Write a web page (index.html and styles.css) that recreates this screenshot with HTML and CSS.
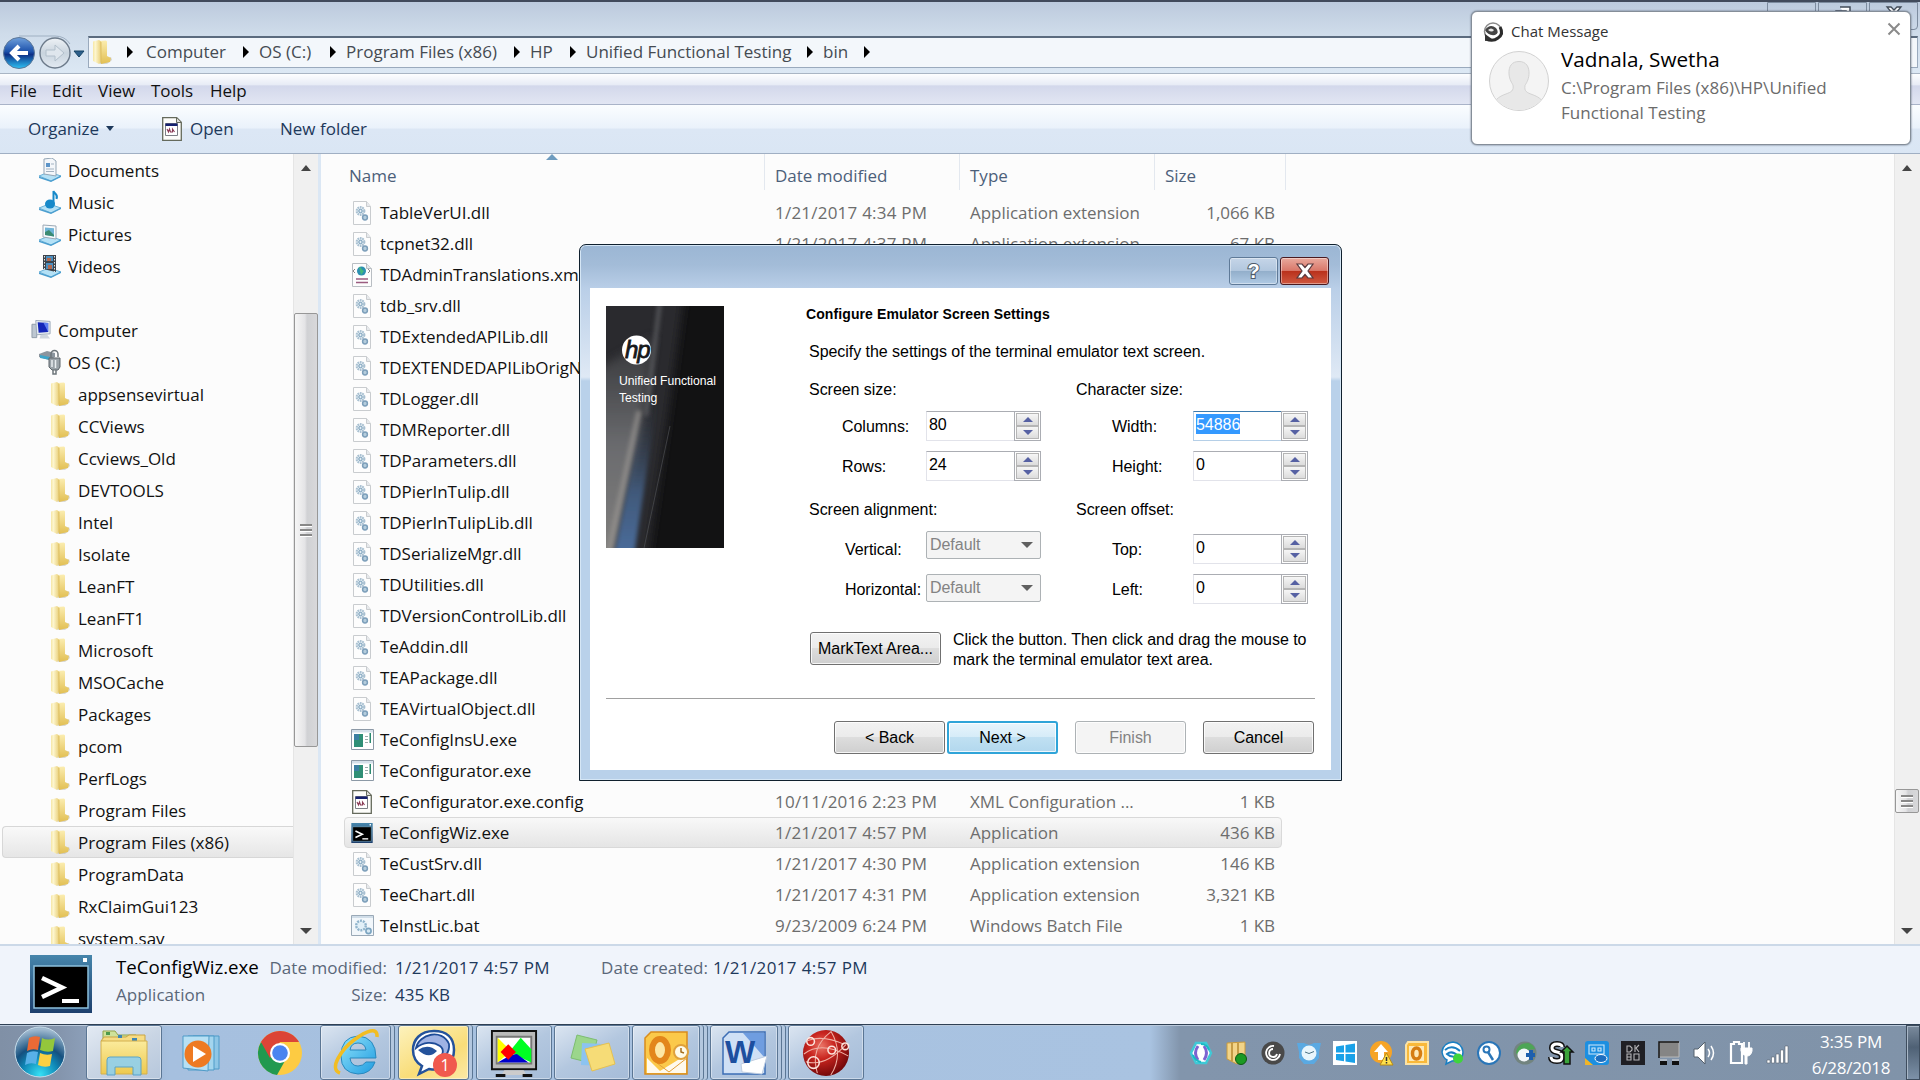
FILE: index.html
```
<!DOCTYPE html>
<html lang="en">
<head>
<meta charset="utf-8">
<title>Unified Functional Testing - bin</title>
<link rel="stylesheet" href="styles.css">
</head>
<body>
<svg class="defs" width="0" height="0">
  <defs>
    <linearGradient id="gFold" x1="0" x2="1"><stop offset="0" stop-color="#f6e6a4"/><stop offset=".3" stop-color="#fdf6cf"/><stop offset="1" stop-color="#e9cf78"/></linearGradient>
    <linearGradient id="gFold2" x1="0" x2="0" y1="0" y2="1"><stop offset="0" stop-color="#fbedb0"/><stop offset="1" stop-color="#e2bf52"/></linearGradient>
    <linearGradient id="gBlue" x1="0" x2="0" y1="0" y2="1"><stop offset="0" stop-color="#6fa0dc"/><stop offset=".45" stop-color="#1d52ab"/><stop offset=".55" stop-color="#0c2f86"/><stop offset="1" stop-color="#2fc3f5"/></linearGradient>
    <linearGradient id="gFwd" x1="0" x2="0" y1="0" y2="1"><stop offset="0" stop-color="#eef2f6"/><stop offset=".5" stop-color="#c9d4de"/><stop offset="1" stop-color="#e3eaf2"/></linearGradient>
    <linearGradient id="gTerm" x1="0" x2="0" y1="0" y2="1"><stop offset="0" stop-color="#4685ab"/><stop offset="1" stop-color="#1d3f6d"/></linearGradient>
    <radialGradient id="gOrb" cx=".5" cy=".95" r=".9"><stop offset="0" stop-color="#35e0f5"/><stop offset=".4" stop-color="#0f86b5"/><stop offset=".62" stop-color="#15507f"/><stop offset="1" stop-color="#9fb9cf"/></radialGradient>
    <radialGradient id="gRed" cx=".4" cy=".35" r=".7"><stop offset="0" stop-color="#ea7466"/><stop offset=".4" stop-color="#c9251f"/><stop offset="1" stop-color="#6b0508"/></radialGradient>
    <linearGradient id="gIe" x1="0" x2="1" y1="0" y2="1"><stop offset="0" stop-color="#8fe3fb"/><stop offset="1" stop-color="#1f9be0"/></linearGradient>
    <linearGradient id="gYel" x1="0" x2="0" y1="0" y2="1"><stop offset="0" stop-color="#fbeb9c"/><stop offset="1" stop-color="#edc94f"/></linearGradient>
  </defs>
  <symbol id="folder" viewBox="0 0 22 26"><path d="M10 21l9-3 1 3-5 4-8 0z" fill="#999" opacity=".35"/><path d="M7 2l7-.5 1 1V17l4 2-1 4-9 2z" fill="url(#gFold2)"/><path d="M1 2.500l6-1.500 2 1.500V23l-2 2-6-3z" fill="url(#gFold)"/><path d="M9 3v21" stroke="#d9b95a" stroke-width=".8"/></symbol>
  <symbol id="dll" viewBox="0 0 20 24"><path d="M1.500.5h13l4 5v18h-17z" fill="#fdfdfd" stroke="#c9cccf"/><path d="M14.500.5v5h4" fill="#e6e9ec" stroke="#c9cccf"/><circle cx="8.500" cy="10" r="3.800" fill="#e6eff5" stroke="#a9c0d1" stroke-width="2.200" stroke-dasharray="1.700 .7"/><circle cx="8.500" cy="10" r="1.700" fill="none" stroke="#6f98b5"/><circle cx="13" cy="16.500" r="2.400" fill="#b5cddd" stroke="#7d9fba" stroke-width="1.500"/></symbol>
  <symbol id="xml" viewBox="0 0 20 24"><path d="M.5.5h14l5 5v18H.5z" fill="#fdfdfd" stroke="#b9bec3"/><path d="M14.500.5v5h5" fill="#e3e7ea" stroke="#b9bec3"/><circle cx="9.500" cy="8" r="4.500" fill="#2c8fb0"/><path d="M7 4c3 0 2 3 5 4l-3 4z" fill="#44b87b"/><path d="M3 6L1 8l2 2M16 6l2 2-2 2" fill="none" stroke="#666" stroke-width=".8"/><path d="M4 16h12M4 19.500h12" stroke="#9b5c80" stroke-width="1.500"/></symbol>
  <symbol id="exe" viewBox="0 0 23 21"><path d="M.5.5h22v20H.5z" fill="#fff" stroke="#8c99a6"/><path d="M1 1h21v2.500H1z" fill="#d5e0ea"/><path d="M3 5h9v13H3z" fill="#2f8f76"/><path d="M3 5h5v6H3z" fill="#3b7fa2"/><path d="M14 7h3v1h-3zm0 3h3v1h-3zm0 3h3v1h-3z" fill="#9aa"/><path d="M18.500 4h1.500v10h-1.500z" fill="#2c8a70"/></symbol>
  <symbol id="cfg" viewBox="0 0 20 24"><path d="M.7.7h14l4.600 4.600v18H.7z" fill="#fdfdfa" stroke="#656a5c" stroke-width="1.300"/><path d="M14.500 1v4.500H19" fill="#ddd" stroke="#656a5c"/><path d="M3.500 6.500h12v12h-12z" fill="#fff" stroke="#7c7f86"/><path d="M3.500 6.500h12v2.500h-12z" fill="#15206e"/><path d="M5 12l1.500 3 1-3 1 3h2v-3l2 3" fill="none" stroke="#8a3a55" stroke-width="1.100"/></symbol>
  <symbol id="term" viewBox="0 0 62 58"><path d="M0 0h62v58H0z" fill="url(#gTerm)"/><path d="M4 11h54v42H4z" fill="#000" stroke="#8cc0dc" stroke-width="1.500"/><path d="M53 3h4v4h-4z" fill="#fff"/><path d="M12 23l20 9.500L12 42" fill="none" stroke="#fff" stroke-width="4.500"/><path d="M32 44h17v4H32z" fill="#fff"/></symbol>
  <symbol id="bat" viewBox="0 0 23 21"><path d="M.5.5h22v20H.5z" fill="#f2f7fb" stroke="#9aa9b7"/><path d="M1 1h21v2H1z" fill="#d0dde8"/><circle cx="10" cy="10.500" r="4.800" fill="#e2f0f8" stroke="#90b4cc" stroke-width="2.400" stroke-dasharray="2 1"/><circle cx="17.500" cy="16" r="2.600" fill="#d6e8f3" stroke="#7ba4c0" stroke-width="1.600"/></symbol>
  <symbol id="base" viewBox="0 0 24 24"><path d="M1 18l10-4 12 4-10 5z" fill="#b4e1f6" stroke="#6bb2d8"/><path d="M1 18.500v1.500l12 4 10-5v-1.500l-10 5z" fill="#4b9ecf"/></symbol>
  <symbol id="lib-doc" viewBox="0 0 24 24"><use href="#base"/><path d="M6 1l8-1 4 3v15l-12-2z" fill="#f4f7fa" stroke="#93a5b5"/><path d="M8 5h4v4H8z" fill="#5c94c8"/><path d="M13 6h3M8 11h8M8 13.500h8" stroke="#a3b3c2"/></symbol>
  <symbol id="lib-mus" viewBox="0 0 24 24"><use href="#base"/><ellipse cx="12" cy="14" rx="5" ry="4.500" fill="#1789c9"/><path d="M15.500 14V1c1 3 5 3 3 8" fill="none" stroke="#1789c9" stroke-width="2"/></symbol>
  <symbol id="lib-pic" viewBox="0 0 24 24"><use href="#base"/><path d="M5 3l13 1v13L5 15z" fill="#f8fafc" stroke="#9aa8b5"/><path d="M7 5.500l9 .8v8.200L7 13z" fill="#6fb4d8"/><path d="M7 10l4-2 5 5v1.500L7 13z" fill="#3b8b72"/></symbol>
  <symbol id="lib-vid" viewBox="0 0 24 24"><use href="#base"/><path d="M5 1h13v17L5 15z" fill="#3d434b"/><path d="M8 2h7v5H8zM8 9h7v6H8z" fill="#4c8fc0"/><path d="M9 4h4v3H9zM10 11h4v4h-4z" fill="#b4694f"/><path d="M6.500 2v14M16.500 2v16" stroke="#e6e6e6" stroke-dasharray="1.500 1.500"/></symbol>
  <symbol id="comp" viewBox="0 0 22 22"><path d="M1 5h5v14H1z" fill="#bdc7d1" stroke="#8f9ba8"/><path d="M5 1l15 1v13l-14 1z" fill="#e6ecf2" stroke="#9aa8b8"/><path d="M7 3l11 .7v9.500L8 14z" fill="#1426b8"/><path d="M13 3.400l5 .3v9.500z" fill="#5c7df0"/><path d="M10 16h7l3 4H9z" fill="#cfd6de"/></symbol>
  <symbol id="drive" viewBox="0 0 24 26"><path d="M1 5l8-3 8 2v4l-6 3-10-3z" fill="#8b959e"/><path d="M2 6l10 2v3L2 9z" fill="#3ea5c9"/><path d="M11 9h11v9l-2 3h-6l-3-3z" fill="#9aa2a8" stroke="#5d656b"/><path d="M13 9V5a3.500 3.500 0 0 1 7 0v3M15 21v4h3v-4" fill="none" stroke="#6d757b" stroke-width="1.500"/><path d="M14 11v7M17.500 11v8" stroke="#e9edf0" stroke-width="1.500"/></symbol>
</svg>

<div class="explorer">
  <header class="glass">
    <div class="caption">
      <span class="cap-btn"></span>
      <span class="cap-btn"><svg width="16" height="14"><path d="M5 1h10v9h-4M1 5h10v8H1z" fill="#fff" stroke="#414b58" stroke-width="1.500"/></svg></span>
      <span class="cap-btn"><svg width="18" height="14"><path d="M2 1h4l3 3 3-3h4l-5 6 5 6H2l5-6z" fill="#fff" stroke="#414b58" stroke-width="1.300"/></svg></span>
    </div>
    <div class="nav">
      <svg class="arrows" width="88" height="38" viewBox="0 0 88 38">
        <path d="M19 2h36q10 0 15 8" fill="none" stroke="#9fb0c2"/>
        <circle cx="19" cy="19" r="15.500" fill="url(#gBlue)" stroke="#5d7898"/>
        <path d="M28 19H13M19 12L12 19l7 7" fill="none" stroke="#fff" stroke-width="4"/>
        <circle cx="55" cy="19" r="15" fill="url(#gFwd)" stroke="#6c7a8a" stroke-width="1.400"/>
        <path d="M46 16h9v-5l9 8-9 8v-5h-9z" fill="#dfe6ed" stroke="#b2bfcb"/>
        <path d="M74 17h10l-5 6z" fill="#2d5f8b" stroke="#174566"/>
      </svg>
      <div class="crumbs">
        <svg width="22" height="26"><use href="#folder"/></svg>
        <i></i><span>Computer</span><i></i><span>OS (C:)</span><i></i><span>Program Files (x86)</span><i></i><span>HP</span><i></i><span>Unified Functional Testing</span><i></i><span>bin</span><i></i>
      </div>
    </div>
  </header>
  <nav class="menu"><span>File</span><span>Edit</span><span>View</span><span>Tools</span><span>Help</span></nav>
  <div class="toolbar">
    <span class="organize">Organize<i></i></span>
    <span class="open"><svg width="20" height="24"><use href="#cfg"/></svg>Open</span>
    <span>New folder</span>
  </div>
  <main class="body">
    <aside class="tree">
      <div class="node lib"><svg width="24" height="24"><use href="#lib-doc"/></svg>Documents</div>
      <div class="node lib"><svg width="24" height="24"><use href="#lib-mus"/></svg>Music</div>
      <div class="node lib"><svg width="24" height="24"><use href="#lib-pic"/></svg>Pictures</div>
      <div class="node lib"><svg width="24" height="24"><use href="#lib-vid"/></svg>Videos</div>
      <div class="node"></div>
      <div class="node top"><svg width="21" height="22"><use href="#comp"/></svg>Computer</div>
      <div class="node lib"><svg width="24" height="26"><use href="#drive"/></svg>OS (C:)</div>
      <div class="node dir"><svg width="22" height="26"><use href="#folder"/></svg>appsensevirtual</div>
      <div class="node dir"><svg width="22" height="26"><use href="#folder"/></svg>CCViews</div>
      <div class="node dir"><svg width="22" height="26"><use href="#folder"/></svg>Ccviews_Old</div>
      <div class="node dir"><svg width="22" height="26"><use href="#folder"/></svg>DEVTOOLS</div>
      <div class="node dir"><svg width="22" height="26"><use href="#folder"/></svg>Intel</div>
      <div class="node dir"><svg width="22" height="26"><use href="#folder"/></svg>Isolate</div>
      <div class="node dir"><svg width="22" height="26"><use href="#folder"/></svg>LeanFT</div>
      <div class="node dir"><svg width="22" height="26"><use href="#folder"/></svg>LeanFT1</div>
      <div class="node dir"><svg width="22" height="26"><use href="#folder"/></svg>Microsoft</div>
      <div class="node dir"><svg width="22" height="26"><use href="#folder"/></svg>MSOCache</div>
      <div class="node dir"><svg width="22" height="26"><use href="#folder"/></svg>Packages</div>
      <div class="node dir"><svg width="22" height="26"><use href="#folder"/></svg>pcom</div>
      <div class="node dir"><svg width="22" height="26"><use href="#folder"/></svg>PerfLogs</div>
      <div class="node dir"><svg width="22" height="26"><use href="#folder"/></svg>Program Files</div>
      <div class="node dir on"><svg width="22" height="26"><use href="#folder"/></svg>Program Files (x86)</div>
      <div class="node dir"><svg width="22" height="26"><use href="#folder"/></svg>ProgramData</div>
      <div class="node dir"><svg width="22" height="26"><use href="#folder"/></svg>RxClaimGui123</div>
      <div class="node dir"><svg width="22" height="26"><use href="#folder"/></svg>system.sav</div>
    </aside>
    <div class="scroll left-scroll"><i class="up"></i><div class="thumb"><b></b><b></b><b></b></div><i class="down"></i></div>
    <section class="files">
      <div class="head"><span>Name<i class="sort"></i></span><span>Date modified</span><span>Type</span><span>Size</span></div>
      <div class="row"><svg width="20" height="24"><use href="#dll"/></svg><span>TableVerUI.dll</span><em class="date">1/21/2017 4:34 PM</em><em>Application extension</em><em>1,066 KB</em></div>
      <div class="row"><svg width="20" height="24"><use href="#dll"/></svg><span>tcpnet32.dll</span><em class="date">1/21/2017 4:37 PM</em><em>Application extension</em><em>67 KB</em></div>
      <div class="row"><svg width="20" height="24"><use href="#xml"/></svg><span>TDAdminTranslations.xml</span></div>
      <div class="row"><svg width="20" height="24"><use href="#dll"/></svg><span>tdb_srv.dll</span></div>
      <div class="row"><svg width="20" height="24"><use href="#dll"/></svg><span>TDExtendedAPILib.dll</span></div>
      <div class="row"><svg width="20" height="24"><use href="#dll"/></svg><span>TDEXTENDEDAPILibOrigN</span></div>
      <div class="row"><svg width="20" height="24"><use href="#dll"/></svg><span>TDLogger.dll</span></div>
      <div class="row"><svg width="20" height="24"><use href="#dll"/></svg><span>TDMReporter.dll</span></div>
      <div class="row"><svg width="20" height="24"><use href="#dll"/></svg><span>TDParameters.dll</span></div>
      <div class="row"><svg width="20" height="24"><use href="#dll"/></svg><span>TDPierInTulip.dll</span></div>
      <div class="row"><svg width="20" height="24"><use href="#dll"/></svg><span>TDPierInTulipLib.dll</span></div>
      <div class="row"><svg width="20" height="24"><use href="#dll"/></svg><span>TDSerializeMgr.dll</span></div>
      <div class="row"><svg width="20" height="24"><use href="#dll"/></svg><span>TDUtilities.dll</span></div>
      <div class="row"><svg width="20" height="24"><use href="#dll"/></svg><span>TDVersionControlLib.dll</span></div>
      <div class="row"><svg width="20" height="24"><use href="#dll"/></svg><span>TeAddin.dll</span></div>
      <div class="row"><svg width="20" height="24"><use href="#dll"/></svg><span>TEAPackage.dll</span></div>
      <div class="row"><svg width="20" height="24"><use href="#dll"/></svg><span>TEAVirtualObject.dll</span></div>
      <div class="row"><svg width="23" height="21"><use href="#exe"/></svg><span>TeConfigInsU.exe</span></div>
      <div class="row"><svg width="23" height="21"><use href="#exe"/></svg><span>TeConfigurator.exe</span></div>
      <div class="row"><svg width="20" height="24"><use href="#cfg"/></svg><span>TeConfigurator.exe.config</span><em class="date">10/11/2016 2:23 PM</em><em>XML Configuration ...</em><em>1 KB</em></div>
      <div class="row on"><svg width="22" height="20"><use href="#term"/></svg><span>TeConfigWiz.exe</span><em class="date">1/21/2017 4:57 PM</em><em>Application</em><em>436 KB</em></div>
      <div class="row"><svg width="20" height="24"><use href="#dll"/></svg><span>TeCustSrv.dll</span><em class="date">1/21/2017 4:30 PM</em><em>Application extension</em><em>146 KB</em></div>
      <div class="row"><svg width="20" height="24"><use href="#dll"/></svg><span>TeeChart.dll</span><em class="date">1/21/2017 4:31 PM</em><em>Application extension</em><em>3,321 KB</em></div>
      <div class="row"><svg width="23" height="21"><use href="#bat"/></svg><span>TeInstLic.bat</span><em class="date">9/23/2009 6:24 PM</em><em>Windows Batch File</em><em>1 KB</em></div>
    </section>
    <div class="scroll right-scroll"><i class="up"></i><div class="thumb"><b></b><b></b><b></b></div><i class="down"></i></div>
  </main>
  <footer class="details">
    <svg width="62" height="58"><use href="#term"/></svg>
    <div class="meta">
      <span class="fname">TeConfigWiz.exe</span><span class="k">Date modified:</span><span class="date">1/21/2017 4:57 PM</span><span class="k">Date created:</span><span class="date">1/21/2017 4:57 PM</span>
      <span class="kind">Application</span><span class="k">Size:</span><span>435 KB</span>
    </div>
  </footer>
</div>

<div class="taskbar">
  <div class="start"><svg width="52" height="52" viewBox="0 0 52 52"><circle cx="26" cy="26" r="25" fill="url(#gOrb)" stroke="#c5dcea"/><path d="M15 12q5-3 11-1l-2 13q-6-2-11 1z" fill="#ea6a35"/><path d="M28 12q6 3 13 0l-2 13q-6 2-13-1z" fill="#94c73b"/><path d="M13 27q5-3 11-1l-2 12q-6-2-11 1z" fill="#58b0e8"/><path d="M26 27q6 3 12 1l-2 12q-6 2-12-1z" fill="#fbd043"/></svg></div>
  <div class="task w76 active"><svg width="50" height="48" viewBox="0 0 50 48"><path d="M4 10V2h12l3 4h18v6z" fill="#cfe29a" stroke="#93a44d"/><path d="M2 12l3-4h22l3-2h16v10z" fill="#f6dc84" stroke="#c9a445"/><path d="M7 3h4v3H7z" fill="#4c9a4c"/><path d="M19 6h4v3h-4zM33 9h5v3h-5z" fill="#3e86b4"/><path d="M2 12h46v33H2z" fill="url(#gYel)" stroke="#d3b04f"/><path d="M8 46V31q0-3 3-3h28q3 0 3 3v15h-8v-8H16v8z" fill="#8fd0f0" stroke="#4d9fce" opacity=".9"/></svg></div>
  <div class="task w78 plain"><svg width="42" height="42" viewBox="0 0 42 42"><path d="M12 4h26v33H12z" fill="#8ec6e6" stroke="#4f9bc8"/><path d="M7 4h26v34H7z" fill="#a3d5ee" stroke="#4f9bc8"/><path d="M2 4h26l-1 35-25-3z" fill="#b7e0f4" stroke="#4f9bc8"/><circle cx="17" cy="22" r="13.500" fill="#ee7a22"/><path d="M12 14v16l13-8z" fill="#fff"/></svg></div>
  <div class="task w80 plain"><svg width="44" height="44" viewBox="0 0 44 44"><circle cx="22" cy="22" r="22" fill="#fdcb42"/><path d="M3 11a22 22 0 0 0 16 33l9-16-6-6-9 0z" fill="#21994f"/><path d="M22 11h19a22 22 0 0 0-38 0l9 16z" fill="#dc4437"/><circle cx="22" cy="22" r="10" fill="#fff"/><circle cx="22" cy="22" r="7.800" fill="#4a84f0"/></svg></div>
  <div class="task w70 stack"><svg width="48" height="48" viewBox="0 0 48 48"><path d="M44 29H18q1 8 8 8 5 0 8-4h9q-4 12-17 12-17-1-17-18Q9 8 26 7q18 1 18 22zM18 21h16q-1-7-8-7t-8 7z" fill="url(#gIe)" stroke="#2988bd"/><path d="M8 44C-4 40 10 20 22 11S46-3 45 8" fill="none" stroke="#f2bd22" stroke-width="3.500"/></svg></div>
  <div class="task w70 stack alert"><svg width="48" height="50" viewBox="0 0 48 50"><path d="M24 3C10 3 3 12 3 22c0 8 4 13 9 16l-3 8 10-5c15 3 25-6 25-19S36 3 24 3z" fill="#fff" stroke="#24529b" stroke-width="2.500"/><path d="M6 20C9 6 32 0 39 16 40 24 34 32 27 31c6-3 8-9 3-13-7-5-17-4-24 2z" fill="#9fb2e3" stroke="#1e4b97" stroke-width="1.800"/><path d="M8 22q10-7 19 1-8 9-19-1z" fill="#24529b"/></svg><span class="badge">1</span></div>
  <div class="task w76"><svg width="48" height="48" viewBox="0 0 50 50"><path d="M2 2h46v40H2z" fill="#b9b9b9" stroke="#111" stroke-width="2"/><path d="M7 8h36v28H7z" fill="#fff" stroke="#777" stroke-width="2"/><path d="M8 9l14 14-14 12z" fill="#ff0"/><path d="M32 9l11 12v14L20 24z" fill="#0f2"/><path d="M8 35l14-8 6-1 12 9z" fill="#00c"/><path d="M19 16l8 8-8 8-8-8z" fill="#f00"/><path d="M15 43h20l3 5H12z" fill="#ccc"/><path d="M6 47h10v3H6zM34 47h10v3H34z" fill="#111"/></svg></div>
  <div class="task w76"><svg width="46" height="42" viewBox="0 0 46 42"><path d="M8 3l20 5-6 23L2 26z" fill="#9bd68c" stroke="#7dbd71"/><path d="M13 11l21 1-1 22-21-1z" fill="#8cc3f0"/><path d="M16 17l24-6 6 21-23 7z" fill="#f6dc77" stroke="#e5c151"/></svg></div>
  <div class="task w68 stack3"><svg width="46" height="46" viewBox="0 0 46 46"><path d="M8 2h36v42H2V8z" fill="#fbc94a" stroke="#d98c1c" stroke-width="1.500"/><path d="M4 28l13 13 26-16v18H4z" fill="#fff" opacity=".9"/><path d="M44 28L26 42l-12-9" fill="none" stroke="#e1a03a"/><ellipse cx="17" cy="20" rx="8" ry="11" fill="#fde6a4" stroke="#e3861b" stroke-width="6"/><circle cx="38" cy="22" r="7" fill="#fffbe8" stroke="#dfa13c" stroke-width="2"/><path d="M38 18v4l3 1" fill="none" stroke="#a66d1b" stroke-width="1.500"/></svg></div>
  <div class="task w68 stack3"><svg width="46" height="46" viewBox="0 0 46 46"><path d="M8 2h36v42H2V8z" fill="#cfe0f5" stroke="#3c6db5" stroke-width="1.500"/><path d="M22 3h21v24z" fill="#6f9de0"/><path d="M20 34l26-8-5 18-20-2z" fill="#fff" stroke="#bfcde0"/><text x="4" y="33" class="word">W</text></svg></div>
  <div class="task w76"><svg width="48" height="48" viewBox="0 0 50 50"><circle cx="25" cy="25" r="24" fill="url(#gRed)"/><path d="M6 12q16-6 38 4M2 26q18-14 46 2M16 46Q8 20 30 3M30 48Q44 26 30 2M4 34q20 6 42-18" fill="none" stroke="#f0b0a5" stroke-width="1.100"/><circle cx="31" cy="22" r="4" fill="none" stroke="#fbe3dc" stroke-width="1.600"/><circle cx="12" cy="35" r="6" fill="none" stroke="#fbe3dc" stroke-width="1.600"/><circle cx="9" cy="13" r="4" fill="none" stroke="#fbe3dc" stroke-width="1.600"/><circle cx="45" cy="18" r="3.500" fill="none" stroke="#fbe3dc" stroke-width="1.600"/></svg></div>
  <div class="tray">
    <svg viewBox="0 0 24 24"><path d="M7 2h10l5 10-5 10H7L2 12z" fill="#fff" stroke="#3fc9d6" stroke-width="2.500"/><path d="M9 5q-5 7 0 14M15 5q5 7 0 14" fill="none" stroke="#7c63d0" stroke-width="3"/><path d="M4 14q2 6 8 7M12 3q6 0 8 6" stroke="#19b9c4" stroke-width="2" fill="none"/></svg>
    <svg viewBox="0 0 24 24"><path d="M2 2l18-1v17l-8 5-10-5z" fill="#f2d488" stroke="#c89a3c"/><path d="M7 2v18M13 2v18" stroke="#b78931" stroke-width="1.500"/><circle cx="16" cy="18" r="5.500" fill="#1b9a23" stroke="#0d5a12"/></svg>
    <svg viewBox="0 0 24 24"><circle cx="12" cy="12" r="11.500" fill="#494949"/><path d="M19 13a7 7 0 1 1-6-8M16 13a4 4 0 1 1-4-5" fill="none" stroke="#fff" stroke-width="1.800"/></svg>
    <svg viewBox="0 0 24 24"><path d="M0 2l7 0 5 2 5-2 7 0-2 9v6l-5 6H7l-5-6v-6z" fill="#5aa9e2"/><circle cx="12" cy="12" r="7.500" fill="#e8f5fc"/><path d="M8 11l4 1.500 5-2" stroke="#4a7184" fill="none"/></svg>
    <svg viewBox="0 0 24 24"><path d="M0 0h24v24H0z" fill="#fff"/><path d="M3 5.500l8-1.200v7.200H3zM12.500 4L22 2.500v9h-9.500zM3 13h8v7.200L3 19zM12.500 13H22v9l-9.500-1.500z" fill="#1aa1e8"/></svg>
    <svg viewBox="0 0 24 24"><circle cx="12" cy="11" r="11" fill="#f6a426"/><path d="M12 3l7 8h-4v8H9v-8H5z" fill="#fff"/><path d="M17.500 12l6.500 12H11z" fill="#ffe14c" stroke="#b98a13"/><path d="M17.500 16v4m0 1v1.500" stroke="#333" stroke-width="1.500"/></svg>
    <svg viewBox="0 0 24 24"><path d="M3 1h20v22H1V4z" fill="#f9b93a" stroke="#fbe3a6" stroke-width="2"/><path d="M4 5h15v15H4z" fill="#fdeab8"/><ellipse cx="11.500" cy="12.500" rx="4" ry="5.500" fill="none" stroke="#d67d12" stroke-width="3.500"/></svg>
    <svg viewBox="0 0 24 24"><path d="M12 1Q2 2 1 11q1 6 5 8l-1 4 6-3q11 0 11-9Q21 2 12 1z" fill="#fff" stroke="#1a7fc2" stroke-width="1.500"/><path d="M4 9q7-6 15 1M6 13q5-4 11 2-7 2-11-2z" fill="none" stroke="#1a7fc2" stroke-width="2"/><circle cx="17" cy="17.500" r="5" fill="#3fd43c"/></svg>
    <svg viewBox="0 0 24 24"><circle cx="12" cy="12" r="11" fill="#fff" stroke="#2a76b8" stroke-width="2"/><circle cx="9.500" cy="8.500" r="3" fill="none" stroke="#2a76b8" stroke-width="2"/><path d="M11 11l5 8" stroke="#2a76b8" stroke-width="2.500"/></svg>
    <svg viewBox="0 0 24 24"><circle cx="12" cy="12" r="11.500" fill="#72847f"/><path d="M3 12Q4 2 15 2q5 1 7 6l-8 1-6 2-2 4z" fill="#4da556"/><circle cx="11" cy="14" r="6.500" fill="#f2f6fa"/><path d="M18 9v10m-5-5h9" stroke="#1d5fae" stroke-width="4"/></svg>
    <svg viewBox="0 0 24 24"><path d="M13 6q0-3-5-3-5 0-5 4 0 3 5 4 5 1 5 5t-5 4q-6 0-6-4" fill="none" stroke="#111" stroke-width="6"/><path d="M13 6q0-3-5-3-5 0-5 4 0 3 5 4 5 1 5 5t-5 4q-6 0-6-4" fill="none" stroke="#fff" stroke-width="3"/><path d="M15 23V11h-3l6-6 6 6h-3v12z" fill="#3ba53a" stroke="#111" stroke-width="1.500"/></svg>
    <svg viewBox="0 0 24 24"><rect width="24" height="24" rx="3" fill="#1d8fe0"/><path d="M4 4h15v9H4zM7 7h3v3H7zM13 7h3v3h-3z" fill="none" stroke="#cfeafc" stroke-width="1.100"/><ellipse cx="16" cy="17.500" rx="6" ry="4" fill="#1c6ec0" stroke="#fff"/><path d="M0 17l8 7H0z" fill="#f0b429"/></svg>
    <svg viewBox="0 0 24 24"><path d="M0 0h24v24H0z" fill="#1f1f24"/><path d="M6 5h3l2 2v2l-2 2H6zM14 4v7m4-7l-3 3 3 4M6 13h4v6H6zm0 3h4M13 13h5v6h-5z" fill="none" stroke="#b5b5b8" stroke-width="1.100"/></svg>
    <svg viewBox="0 0 24 24"><path d="M2 1h20v15H2z" fill="#858585" stroke="#b9b9b9"/><path d="M2 17V1h20" fill="none" stroke="#111" stroke-width="1.500"/><path d="M3 20h7v4H3zM15 20h7v4h-7z" fill="#111"/><path d="M3 19h7M15 19h7" stroke="#ddd"/></svg>
    <svg viewBox="0 0 24 24"><path d="M1 8h4l7-7v22l-7-7H1z" fill="#fff" stroke="#55606c"/><path d="M15 8q3 4 0 8M18 5q5 7 0 14" fill="none" stroke="#fff" stroke-width="1.500"/></svg>
    <svg viewBox="0 0 24 24"><path d="M2 3h3V1h5v2h3v19H2z" fill="none" stroke="#fff" stroke-width="2.200"/><path d="M15 1v6M20 1v6" stroke="#fff" stroke-width="1.800"/><path d="M12 7h11v3q-1 5-5 5t-6-5zM16 15v8h2v-8z" fill="#fff" stroke="#fff"/></svg>
    <svg viewBox="0 0 24 24"><path d="M2 22v-3h3v3zM6.500 22v-6h3v6zM11 22V13h3v9zM15.500 22V9h3v13zM20 22V5h3v17z" fill="#fff" stroke="#5b6672" stroke-width=".6"/></svg>
  </div>
  <div class="clock"><span>3:35 PM</span><span>6/28/2018</span></div>
  <div class="peek"></div>
</div>

<div class="dialog">
  <div class="dlg-title">
    <span class="tb help">?</span>
    <span class="tb close"><svg width="20" height="16" viewBox="0 0 20 16"><path d="M2 1h5l3 3.500L13 1h5l-5 7 5 7h-5l-3-3.500L7 15H2l5-7z" fill="#fff" stroke="#5a3a3e" stroke-width="1.200"/></svg></span>
  </div>
  <div class="dlg-body">
    <div class="dlg-main">
      <svg class="brand" width="118" height="242" viewBox="0 0 118 242">
        <defs>
          <linearGradient id="st" x1="0" y1="0" x2="0" y2="1"><stop offset="0" stop-color="#37383b"/><stop offset=".5" stop-color="#76777a"/><stop offset="1" stop-color="#918f8c"/></linearGradient>
          <linearGradient id="sb" x1="0" y1="0" x2="0" y2="1"><stop offset="0" stop-color="#33383f" stop-opacity="0"/><stop offset=".6" stop-color="#41597a"/><stop offset="1" stop-color="#4a6d9c"/></linearGradient>
          <filter id="soft" x="-30%" y="-10%" width="160%" height="120%"><feGaussianBlur stdDeviation="5"/></filter>
          <filter id="soft2" x="-30%" y="-10%" width="160%" height="120%"><feGaussianBlur stdDeviation="2"/></filter>
          <clipPath id="bc"><path d="M0 0h118v242H0z"/></clipPath>
        </defs>
        <g clip-path="url(#bc)">
          <path d="M0 0h118v242H0z" fill="#121213"/>
          <path d="M-10-10h88L62 110 42 252H-10z" fill="#2a2b2e" filter="url(#soft)"/>
          <path d="M48 30L34 130 8 252H-20V70z" fill="url(#st)" opacity=".85" filter="url(#soft)"/>
          <path d="M52 90L28 250H8L34 120z" fill="url(#sb)" filter="url(#soft2)"/>
          <path d="M33 105L2 250" stroke="#9d9a96" stroke-width="5" opacity=".7" filter="url(#soft2)"/>
          <path d="M54-5L40 110" stroke="#67696d" stroke-width="4" opacity=".7" filter="url(#soft2)"/>
          <path d="M64 120L38 242" stroke="#55575b" stroke-width="1" opacity=".6"/>
        </g>
        <circle cx="30.500" cy="44" r="14.500" fill="#fff"/>
        <text x="19" y="52" class="hp">hp</text>
        <text x="13" y="79" class="uft">Unified Functional</text>
        <text x="13" y="95.500" class="uft">Testing</text>
      </svg>
      <div class="form">
        <h1>Configure Emulator Screen Settings</h1>
        <p class="intro">Specify the settings of the terminal emulator text screen.</p>
        <span class="t">Screen size:</span><span class="t r">Character size:</span>
        <label>Columns:</label><div class="spin"><span>80</span><u><i></i><i></i></u></div>
        <label class="r">Width:</label><div class="spin focus"><span><mark>54886</mark></span><u><i></i><i></i></u></div>
        <label>Rows:</label><div class="spin"><span>24</span><u><i></i><i></i></u></div>
        <label class="r">Height:</label><div class="spin"><span>0</span><u><i></i><i></i></u></div>
        <span class="t">Screen alignment:</span><span class="t r">Screen offset:</span>
        <label class="in">Vertical:</label><div class="combo v">Default<i></i></div>
        <label class="r">Top:</label><div class="spin"><span>0</span><u><i></i><i></i></u></div>
        <label class="in">Horizontal:</label><div class="combo h">Default<i></i></div>
        <label class="r">Left:</label><div class="spin"><span>0</span><u><i></i><i></i></u></div>
        <div class="mark"><span class="btn wide">MarkText Area...</span><p>Click the button. Then click and drag the mouse to<br>mark the terminal emulator text area.</p></div>
      </div>
    </div>
    <div class="dlg-foot"><span class="btn">&lt; Back</span><span class="btn next">Next &gt;</span><span class="btn off">Finish</span><span class="btn">Cancel</span></div>
  </div>
</div>

<div class="toast">
  <div class="toast-head">
    <svg width="20" height="20" viewBox="0 0 20 20"><circle cx="10" cy="9.500" r="8.500" fill="#fff" stroke="#8a8a8a" stroke-width="1.500"/><path d="M17 5q4 7-2 11-5 4-12 1" fill="none" stroke="#2b2b2b" stroke-width="3"/><path d="M2 8q5-7 11-2 4 5-1 7-7 1-10-5z" fill="#444"/><path d="M2 12v7l7-2z" fill="#333"/><path d="M5 8q3-3 6 0-2 3-6 0z" fill="#e8e8e8"/></svg>
    <span>Chat Message</span>
    <svg class="x" width="14" height="14" viewBox="0 0 14 14"><path d="M1.500 1.500l11 11M12.500 1.500l-11 11" stroke="#8a8a8a" stroke-width="2"/></svg>
  </div>
  <div class="toast-body">
    <svg width="60" height="60" viewBox="0 0 60 60"><defs><clipPath id="av"><circle cx="30" cy="30" r="29"/></clipPath></defs><circle cx="30" cy="30" r="29.500" fill="#f4f4f4" stroke="#d2d2d2"/><path clip-path="url(#av)" d="M30 10.500c7 0 10.500 5 10 13-.5 6-3 9-4 11-1 6 2 7 7 9 6 2 10 5 12 9v10H5V52c2-4 6-7 12-9 5-2 8-3 7-9-1-2-3.500-5-4-11-.5-8 3-12.500 10-12.500z" fill="#e8e8e8" stroke="#d2d2d2"/></svg>
    <div><strong>Vadnala, Swetha</strong><p>C:\Program Files (x86)\HP\Unified<br>Functional Testing</p></div>
  </div>
</div>
</body>
</html>
```
FILE: styles.css
```
* { box-sizing: border-box; }
body { margin: 0; width: 1920px; height: 1080px; overflow: hidden; background: #fcfcfc; font: 17px/1 "Open Sans", "Noto Sans", sans-serif; color: #111; }
.defs { position: absolute; }
svg { display: block; flex: none; overflow: visible; }
i, em { font-style: normal; }
span { white-space: nowrap; }
.date { letter-spacing: .25px; }

.explorer { display: flex; flex-direction: column; height: 1024px; }
.glass { height: 73px; border-top: 2px solid #414a5b; background: linear-gradient(#bccadd, #cfdcea 45%, #dce8f4); }
.caption { display: flex; justify-content: flex-end; gap: 2px; height: 30px; padding-right: 2px; }
.cap-btn { display: flex; justify-content: center; width: 49px; height: 28px; padding-top: 3px; border: 1px solid #7d8c9f; border-radius: 0 0 4px 4px; }
.nav { display: flex; height: 41px; align-items: flex-start; margin-top: 2px; }
.crumbs { display: grid; grid-template-columns: 35px 19px 97px 16px 71px 16px 168px 16px 40px 16px 221px 16px 41px 16px; align-items: center; width: 1830px; height: 32px; margin-top: 2px; padding: 0 0 2px 3px; background: #f3f7fb; border: 1px solid #9aaabd; border-top: 2px solid #5b6b7e; color: #454b52; }
.crumbs i { width: 0; height: 0; border: 6px solid transparent; border-left-color: #000; border-right-width: 0; }
.menu { display: grid; grid-template-columns: 42px 46px 53px 59px 60px; align-items: center; height: 32px; padding: 2px 0 0 10px; border-top: 1px solid #a9b5c4; border-bottom: 1px solid #a9b3c8; background: linear-gradient(#fdfeff, #e8ecf6 35%, #d3d8eb 40%, #e2e6f3); }
.toolbar { display: grid; grid-template-columns: 134px 118px 120px; align-items: center; height: 49px; padding: 0 0 1px 28px; color: #1e395b; border-bottom: 1px solid #a0afc3; background: linear-gradient(#fbfdff, #eaf2fb 48%, #dce7f5 50%, #dae6f4); }
.organize i { display: inline-block; margin: 0 0 4px 7px; border: 4px solid transparent; border-top: 5px solid #1e395b; border-bottom: 0; }
.open { display: flex; align-items: center; gap: 8px; }

.body { display: flex; height: 790px; }
.tree { width: 293px; overflow: hidden; }
.node { display: flex; align-items: center; height: 32px; padding-left: 38px; gap: 6px; }
.node.dir { padding-left: 50px; }
.node.top { padding-left: 31px; }
.node.on { margin-left: 2px; padding-left: 47px; border: 1px solid #d7d7d7; border-right: 0; border-radius: 4px 0 0 4px; background: linear-gradient(#f9f9f9, #e6e6e6); }
.scroll { display: flex; flex-direction: column; align-items: center; background: #f0f0f0; border-left: 1px solid #e5e5e5; }
.scroll .up { border: 5px solid transparent; border-top: 0; border-bottom: 6px solid #444; margin-top: 11px; }
.scroll .down { border: 6px solid transparent; border-bottom: 0; border-top: 6px solid #444; margin-top: auto; margin-bottom: 10px; }
.thumb { display: flex; flex-direction: column; align-items: center; justify-content: center; gap: 2px; width: 24px; border: 1px solid #979797; border-radius: 2px; background: linear-gradient(90deg, #f6f6f6, #e4e4e6 45%, #d0d1d4 55%, #d8d8da); }
.thumb b { width: 12px; height: 3px; background: #888; border-bottom: 1px solid #fff; }
.left-scroll { width: 25px; }
.left-scroll .thumb { height: 434px; margin-top: 142px; }
.right-scroll { width: 26px; margin-left: auto; padding-right: 1px; }
.right-scroll .thumb { height: 24px; margin-top: 618px; }
.files { width: 980px; padding-left: 23px; border-left: 3px solid #dbe7f4; }
.head { display: grid; grid-template-columns: 421px 195px 195px 131px; height: 43px; color: #4c607a; }
.head span { position: relative; padding-left: 10px; padding-top: 13px; border-right: 1px solid #e3e8ef; height: 36px; }
.head span:first-child { padding-left: 5px; }
.sort { position: absolute; left: 202px; top: 0; border: 6px solid transparent; border-top: 0; border-bottom: 6px solid #6f9cbf; }
.row { display: grid; grid-template-columns: 33px 395px 195px 195px 111px; align-items: center; width: 938px; height: 31px; padding-left: 2px; border: 1px solid transparent; letter-spacing: -.04px; }
.row svg { justify-self: center; margin-right: 3px; }
.row em { color: #6d6d6d; white-space: nowrap; }
.row .date { letter-spacing: .22px; }
.row em:last-child { text-align: right; padding-right: 1px; }
.row.on { border-color: #d9d9d9; border-radius: 4px; background: linear-gradient(#f8f8f8, #e5e5e5); }

.details { display: flex; height: 80px; padding: 9px 0 0 30px; background: #f0f4fb; border-top: 2px solid #ccd9e8; color: #1e395b; }
.meta { display: grid; grid-template-columns: 150px 129px 206px 112px 200px; grid-auto-rows: 27px; align-content: start; align-items: center; margin: -1px 0 0 24px; }
.meta .fname { color: #000; font-size: 18.700px; }
.meta .date { letter-spacing: .38px; }
.meta .k, .meta .kind { color: #5a6779; letter-spacing: .05px; }
.meta .k { text-align: right; padding-right: 8px; }

.taskbar { display: flex; height: 56px; background: linear-gradient(90deg, #8090a6, #8495ad 60px, #a6c0df 170px, #a9c3e1 1150px, #8295ac 1180px, #8093a9); border-top: 1px solid #2f4054; box-shadow: inset 0 1px 0 #b9c8da; }
.start { width: 86px; padding: 1px 0 0 14px; }
.task { position: relative; display: flex; align-items: center; justify-content: center; height: 55px; margin-right: 2px; border: 1px solid #5b7694; border-radius: 3px; background: linear-gradient(150deg, #dbe5f1, #b3c7df 50%, #a5bcd8); box-shadow: inset 0 0 0 1px #ffffff66; }
.w68 { width: 68px; } .w70 { width: 71px; } .w76 { width: 76px; } .w78 { width: 75px; } .w80 { width: 77px; }
.task.active { background: linear-gradient(150deg, #e3eaf3, #c9d5e4 50%, #b6c7dc); }
.task.plain { border-color: transparent; background: none; box-shadow: none; }
.stack { margin-right: 7px; box-shadow: inset 0 0 0 1px #ffffff66, 3px 0 0 #b3c7df, 4px 0 0 #5b7694; }
.stack3 { margin-right: 10px; box-shadow: inset 0 0 0 1px #ffffff66, 3px 0 0 #b3c7df, 4px 0 0 #5b7694, 7px 0 0 #b3c7df, 8px 0 0 #5b7694; }
.task.alert { background: linear-gradient(150deg, #fdf2bd, #f9dd79 60%, #fbe9a6); }
.badge { position: absolute; left: 34px; top: 27px; width: 24px; height: 24px; border-radius: 50%; background: #f0594e; color: #fff; font-size: 16px; line-height: 24px; text-align: center; }
.word { font: bold 32px "Liberation Sans", sans-serif; fill: #1d4f9f; }
.tray { display: flex; gap: 12px; margin: 16px 0 0 auto; }
.tray svg { width: 24px; height: 24px; }
.clock { display: flex; flex-direction: column; align-items: center; gap: 9px; width: 96px; margin: 8px 7px 0 14px; color: #fff; font-size: 17px; letter-spacing: -.2px; }
.peek { width: 14px; border: 1px solid #3e4d5e; background: linear-gradient(#7b8b9d, #4f6175 40%, #7d91a8); box-shadow: inset 1px 1px 0 #a9b7c7; }

.dialog { position: absolute; left: 579px; top: 244px; width: 763px; height: 537px; padding: 0 10px 10px; border: 1px solid #10202e; border-radius: 7px 7px 0 0; background: linear-gradient(#9bb6d4, #a3bcd8 20px, #bacfe8 44px, #dfe9f5 132px, #b9d1ea 136px); box-shadow: inset 0 0 0 1px #d5e6f5; font-family: "Liberation Sans", Arial, sans-serif; font-size: 16px; letter-spacing: -.04px; color: #000; }
.dlg-title { display: flex; justify-content: flex-end; gap: 2px; height: 43px; padding: 12px 2px 0 0; }
.tb { display: flex; align-items: center; justify-content: center; width: 49px; height: 28px; border: 1px solid #5f7a98; border-radius: 3px; background: linear-gradient(#c5d5e8, #b2c7de 48%, #92aeca 50%, #b0cae4); box-shadow: inset 0 0 0 1px #ffffff66; }
.tb.help { font-weight: bold; font-size: 20px; color: #fff; -webkit-text-stroke: 2px #4d5a69; paint-order: stroke fill; }
.tb.close { border-color: #4a1a20; background: linear-gradient(#e9a99d, #d9786a 48%, #b9301b 50%, #cf5840); }
.dlg-body { height: 482px; padding: 18px 16px 0; background: #fff; }
.dlg-main { display: flex; height: 393px; border-bottom: 1px solid #a0a0a0; }
.form { display: grid; grid-template-columns: 117px 115px 35px 117px 115px; grid-template-rows: 24px 50px 26px 48px 32px 54px 26px 54px 65px; align-items: center; margin: -4px 0 0 85px; height: 379px; white-space: nowrap; }
h1 { grid-column: 1 / -1; margin: 0 0 0 -3px; font-size: 14px; letter-spacing: .1px; }
p { margin: 0; }
.intro { grid-column: 1 / -1; padding-top: 2px; }
.t { grid-column: 1 / 4; padding-top: 2px; }
.t.r { grid-column: 4 / 6; }
label { padding: 2px 0 0 33px; }
label.in { padding-left: 36px; }
label.r { grid-column: 4; padding-left: 36px; }
.spin { display: flex; height: 30px; border: 1px solid #e2e3ea; border-top-color: #abadb3; background: #fff; }
.spin span { flex: 1; padding: 5px 0 0 2px; }
.spin.focus { border-color: #b5cfe7; border-top-color: #3d7bad; }
mark { display: inline-block; height: 20px; padding-top: 3px; margin-top: -3px; background: #3399ff; color: #fff; }
.spin u { display: flex; flex-direction: column; justify-content: space-between; width: 27px; height: 30px; margin: -1px; border: 1px solid #abadb3; padding: 1px; }
.spin u i { display: flex; align-items: center; justify-content: center; height: 13px; border: 1px solid #b5b5b5; background: linear-gradient(#f6f6f6, #dcdcdc); }
.spin u i::after { content: ""; border: 5px solid transparent; border-top: 0; border-bottom: 5px solid #5661a3; }
.spin u i + i::after { border-bottom: 0; border-top: 5px solid #5661a3; }
.combo { display: flex; align-items: center; justify-content: space-between; height: 28px; padding: 0 7px 0 3px; border: 1px solid #adb2b5; border-radius: 2px; background: #f4f4f4; color: #838383; }
.combo.v { margin-top: -8px; }
.combo.h { margin-top: -2px; }
.combo i { border: 6px solid transparent; border-top: 6px solid #606060; border-bottom: 0; }
.mark { grid-column: 1 / -1; display: flex; align-items: center; gap: 12px; padding-left: 1px; }
.mark p { line-height: 20px; padding-top: 2px; }
.btn { display: flex; align-items: center; justify-content: center; width: 111px; height: 33px; border: 1px solid #707070; border-radius: 3px; background: linear-gradient(#f2f2f2, #ebebeb 48%, #dddddd 50%, #cfcfcf); box-shadow: inset 0 0 0 1px #ffffffcc; }
.btn.wide { width: 131px; }
.btn.next { border: 2px solid #2fa4d8; background: linear-gradient(#e8f5fc, #d6ecf8 48%, #c0e0f2 50%, #b2d8ee); }
.btn.off { margin: 0 15px; border-color: #adb2b5; background: #f4f4f4; color: #838383; }
.dlg-foot { display: flex; justify-content: flex-end; gap: 2px; padding: 22px 1px 0 0; }
.hp { font: italic 24px "Liberation Sans", sans-serif; fill: #17181a; stroke: #17181a; stroke-width: .8px; letter-spacing: -1px; }
.uft { font: 12.200px "Liberation Sans", sans-serif; fill: #fff; }

.toast { position: absolute; left: 1471px; top: 11px; width: 440px; height: 134px; padding: 10px 9px 0 11px; border: 1px solid #858e99; border-radius: 6px; background: #fff; box-shadow: 0 0 2px #4a5666; }
.toast-head { display: flex; align-items: flex-start; gap: 8px; height: 29px; font-size: 15px; color: #333; }
.toast-head span { padding-top: 2px; }
.toast-head .x { margin-left: auto; }
.toast-body { display: flex; gap: 12px; padding-left: 6px; }
.toast strong { display: block; font-weight: 400; font-size: 20.700px; line-height: 24px; margin-top: -4px; color: #000; }
.toast p { margin-top: 4px; font-size: 17px; letter-spacing: .03px; line-height: 25px; color: #6b6b6b; white-space: nowrap; }
```
